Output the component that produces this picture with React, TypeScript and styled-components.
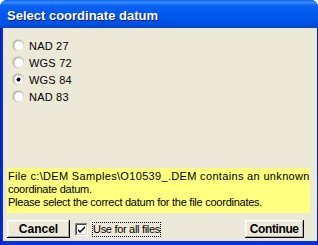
import React, { useState } from "react";
import styled, { createGlobalStyle } from "styled-components";

const Global = createGlobalStyle`
  html, body { margin: 0; padding: 0; background: #ffffff; }
  body { font-family: "Liberation Sans", Arial, sans-serif; }
`;

const Window = styled.div`
  width: 318px;
  height: 245px;
  box-sizing: border-box;
  display: flex;
  flex-direction: column;
  background: #0831d9;
  border-radius: 7px 7px 0 0;
  overflow: hidden;
`;

const TitleBar = styled.div`
  height: 28px;
  flex: none;
  display: flex;
  align-items: center;
  padding-left: 7px;
  padding-top: 2px;
  box-sizing: border-box;
  background: linear-gradient(
    to bottom,
    #0a5fef 0%,
    #3b8dff 8%,
    #0c63f5 20%,
    #0058ee 45%,
    #0055ea 70%,
    #0050e0 88%,
    #0043c8 100%
  );
  color: #ffffff;
  font-family: "Liberation Sans", Arial, sans-serif;
  font-weight: bold;
  font-size: 13px;
  text-shadow: 1px 1px 0 #0a1e78;
`;

const Frame = styled.div`
  flex: 1;
  display: flex;
  padding: 0 3px 4px 3px;
  background: linear-gradient(to right, #0019cf, #0831d9 2px, #0831d9 calc(100% - 2px), #001ea0);
`;

const Body = styled.div`
  flex: 1;
  background: #ece9d8;
  display: flex;
  flex-direction: column;
  padding: 9px 7px 3px 4px;
  font-size: 11px;
  color: #000000;
`;

const RadioList = styled.div`
  display: flex;
  flex-direction: column;
  padding-left: 5px;
`;

const RadioRow = styled.label`
  display: flex;
  align-items: center;
  height: 17px;
  gap: 4px;
  cursor: default;
  letter-spacing: 0.2px;
`;

const Spacer = styled.div`
  flex: 1;
`;

const Message = styled.div`
  background: #ffff80;
  height: 45px;
  box-sizing: border-box;
  padding: 2px 0 0 1px;
  line-height: 13px;
  font-size: 11px;
  white-space: nowrap;
`;

const Line = styled.div<{ $ls: number }>`
  letter-spacing: ${(p) => p.$ls}px;
`;

const Footer = styled.div`
  display: flex;
  align-items: center;
  margin-top: 7px;
  height: 18px;
`;

const Button = styled.button<{ $w: number; $ls?: number }>`
  width: ${(p) => p.$w}px;
  height: 18px;
  box-sizing: border-box;
  background: #ece9d8;
  border: none;
  padding: 0;
  font-family: "Liberation Sans", Arial, sans-serif;
  font-weight: bold;
  font-size: 12px;
  letter-spacing: ${(p) => p.$ls ?? 0}px;
  color: #000;
  box-shadow: inset -1px -1px 0 #000000, inset 1px 1px 0 #ffffff,
    inset -2px -2px 0 #aca899, inset 2px 2px 0 #f5f4ea;
`;

const CheckWrap = styled.label`
  display: flex;
  align-items: center;
  margin-left: 5px;
  gap: 5px;
`;

const CheckLabel = styled.span`
  outline: 1px dotted #000;
  outline-offset: 0;
  padding: 0;
  line-height: 13px;
  letter-spacing: -0.3px;
`;

const FooterSpacer = styled.div`
  flex: 1;
`;

const RightGap = styled.div`
  width: 6px;
  flex: none;
`;

function RadioIcon({ checked }: { checked: boolean }) {
  return (
    <svg width="13" height="13" viewBox="0 0 13 13">
      <defs>
        <linearGradient id="rg" x1="0" y1="0" x2="1" y2="1">
          <stop offset="0" stopColor="#9a9a92" />
          <stop offset="0.5" stopColor="#c9c7bb" />
          <stop offset="1" stopColor="#ffffff" />
        </linearGradient>
      </defs>
      <circle cx="6.5" cy="6.5" r="6" fill="url(#rg)" />
      <circle cx="6.5" cy="6.5" r="4.6" fill="#ffffff" />
      <path d="M2.4 8 A4.6 4.6 0 0 1 8 2.2" fill="none" stroke="#d8d6cc" strokeWidth="1" />
      {checked && <circle cx="6.5" cy="6.5" r="2" fill="#000" />}
    </svg>
  );
}

function CheckIcon() {
  return (
    <svg width="13" height="13" viewBox="0 0 13 13">
      <rect x="0" y="0" width="13" height="13" fill="#ffffff" />
      <path d="M0.5 12.5 V0.5 H12.5" fill="none" stroke="#808080" />
      <path d="M1.5 11.5 V1.5 H11.5" fill="none" stroke="#404040" />
      <path d="M0.5 12.5 H12.5 V0.5" fill="none" stroke="#ffffff" />
      <path d="M1.5 11.5 H11.5 V1.5" fill="none" stroke="#d4d0c8" />
      <path d="M3 6 L5 8 L10 3 V5 L5 10 L3 8 Z" fill="#000" />
    </svg>
  );
}

const options = ["NAD 27", "WGS 72", "WGS 84", "NAD 83"];

export default function App() {
  const [sel] = useState("WGS 84");
  return (
    <>
      <Global />
      <Window>
        <TitleBar>Select coordinate datum</TitleBar>
        <Frame>
          <Body>
            <RadioList>
              {options.map((o) => (
                <RadioRow key={o}>
                  <RadioIcon checked={o === sel} />
                  <span>{o}</span>
                </RadioRow>
              ))}
            </RadioList>
            <Spacer />
            <Message>
              <Line $ls={0.33}>File c:\DEM Samples\O10539_.DEM contains an unknown</Line>
              <Line $ls={-0.25}>coordinate datum.</Line>
              <Line $ls={-0.25}>Please select the correct datum for the file coordinates.</Line>
            </Message>
            <Footer>
              <Button $w={63}>Cancel</Button>
              <CheckWrap>
                <CheckIcon />
                <CheckLabel>Use for all files</CheckLabel>
              </CheckWrap>
              <FooterSpacer />
              <Button $w={59} $ls={-0.4}>Continue</Button>
              <RightGap />
            </Footer>
          </Body>
        </Frame>
      </Window>
    </>
  );
}
